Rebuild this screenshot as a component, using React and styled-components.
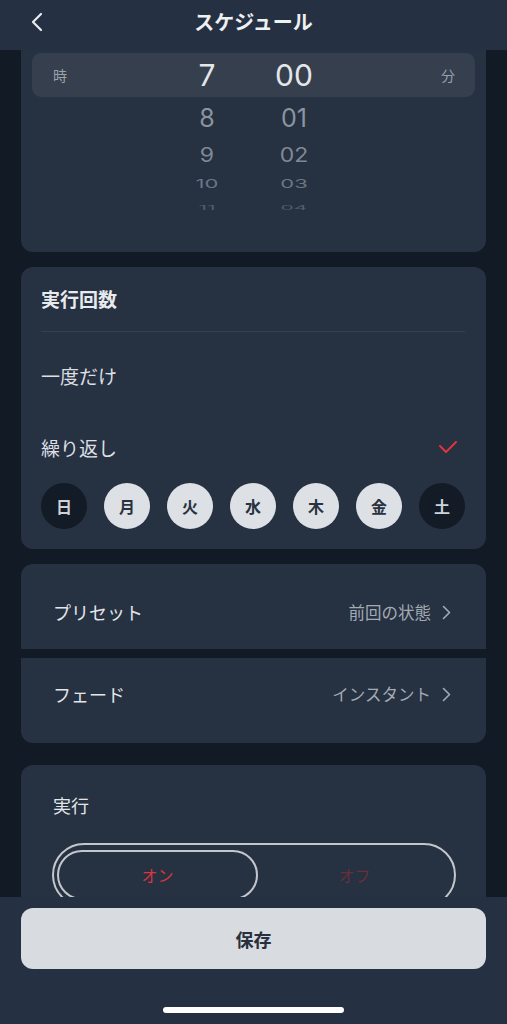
import React, { useState } from "react";
import styled, { createGlobalStyle } from "styled-components";

const GlobalStyle = createGlobalStyle`
  * { box-sizing: border-box; }
  body {
    margin: 0;
    background: #121a26;
    font-family: "Noto Sans CJK JP", "Noto Sans", sans-serif;
  }
`;

const wheelRows = [
  { hour: "7", minute: "00", h: 44, size: 30, color: "#e4e6e9", sy: 1, selected: true },
  { hour: "8", minute: "01", h: 42, size: 25, color: "#8b94a0", sy: 1 },
  { hour: "9", minute: "02", h: 32, size: 23, color: "#7f8996", sy: 0.85 },
  { hour: "10", minute: "03", h: 26, size: 22, color: "#6c7683", sy: 0.55 },
  { hour: "11", minute: "04", h: 12, size: 21, color: "#525c69", sy: 0.28 },
];

const days = [
  { label: "日", on: false },
  { label: "月", on: true },
  { label: "火", on: true },
  { label: "水", on: true },
  { label: "木", on: true },
  { label: "金", on: true },
  { label: "土", on: false },
];

function Chevron() {
  return (
    <svg width="9" height="15" viewBox="0 0 9 15">
      <polyline points="1.5,1.5 7.5,7.5 1.5,13.5" fill="none" stroke="#a3aab3" strokeWidth="1.6" strokeLinecap="round" strokeLinejoin="round" />
    </svg>
  );
}

function Check() {
  return (
    <svg width="20" height="14" viewBox="0 0 20 14">
      <polyline points="2,6 8,12 18,2" fill="none" stroke="#e0343b" strokeWidth="2" strokeLinecap="round" strokeLinejoin="round" />
    </svg>
  );
}

function App() {
  const [mode, setMode] = useState("repeat");
  const [on, setOn] = useState(true);

  return (
    <Screen>
      <GlobalStyle />
      <Header>
        <BackButton>
          <svg width="12" height="20" viewBox="0 0 12 20">
            <polyline points="10,2 2,10 10,18" fill="none" stroke="#e9ebee" strokeWidth="2.2" strokeLinecap="round" strokeLinejoin="round" />
          </svg>
        </BackButton>
        <Title>スケジュール</Title>
        <span />
      </Header>

      <Content>
        <PickerCard>
          {wheelRows.map((row) => (
            <WheelRow key={row.hour} $h={row.h} $selected={row.selected}>
              <UnitLabel>{row.selected ? "時" : ""}</UnitLabel>
              <Digit $size={row.size} $color={row.color} $sy={row.sy}>{row.hour}</Digit>
              <Digit $size={row.size} $color={row.color} $sy={row.sy}>{row.minute}</Digit>
              <UnitLabel $right>{row.selected ? "分" : ""}</UnitLabel>
            </WheelRow>
          ))}
        </PickerCard>

        <Card $pad="20px 21px 20px 20px">
          <SectionTitle>実行回数</SectionTitle>
          <Divider />
          <OptionRow $first onClick={() => setMode("once")}>
            <span>一度だけ</span>
            {mode === "once" && <Check />}
          </OptionRow>
          <OptionRow onClick={() => setMode("repeat")}>
            <span>繰り返し</span>
            {mode === "repeat" && <Check />}
          </OptionRow>
          <DayRow>
            {days.map((d) => (
              <DayCircle key={d.label} $on={d.on}>{d.label}</DayCircle>
            ))}
          </DayRow>
        </Card>

        <Group>
          <LinkRow $top>
            <RowLabel>プリセット</RowLabel>
            <RowValue>前回の状態<Chevron /></RowValue>
          </LinkRow>
          <LinkRow>
            <RowLabel>フェード</RowLabel>
            <RowValue>インスタント<Chevron /></RowValue>
          </LinkRow>
        </Group>

        <Card $pad="28px 30px 30px 31px">
          <RowLabel $small>実行</RowLabel>
          <Segment>
            <SegmentItem $active={on} onClick={() => setOn(true)}>オン</SegmentItem>
            <SegmentItem $active={!on} onClick={() => setOn(false)}>オフ</SegmentItem>
          </Segment>
        </Card>
      </Content>

      <Footer>
        <SaveButton>保存</SaveButton>
        <HomeIndicator />
      </Footer>
    </Screen>
  );
}

export default App;

const Screen = styled.div`
  height: 100vh;
  display: flex;
  flex-direction: column;
  background: #121a26;
  overflow: hidden;
`;

const Header = styled.header`
  flex-shrink: 0;
  height: 50px;
  display: grid;
  grid-template-columns: 70px 1fr 70px;
  align-items: center;
  background: #253042;
`;

const BackButton = styled.button`
  border: none;
  background: none;
  padding: 0 0 7px 31px;
  display: flex;
  align-items: center;
  cursor: pointer;
`;

const Title = styled.h1`
  margin: 0 0 8px;
  text-align: center;
  font-size: 20px;
  font-weight: 700;
  color: #eef0f2;
`;

const Content = styled.main`
  flex: 1;
  min-height: 0;
  overflow: hidden;
  padding: 0 21px;
  display: flex;
  flex-direction: column;
  gap: 15px;
`;

const Card = styled.section`
  flex-shrink: 0;
  background: #263142;
  border-radius: 12px;
  padding: ${(p) => p.$pad || "20px"};
`;

const PickerCard = styled(Card)`
  border-radius: 0 0 12px 12px;
  padding: 3px 11px 43px;
`;

const WheelRow = styled.div`
  height: ${(p) => p.$h}px;
  display: grid;
  grid-template-columns: 97px 60px 60px 1fr;
  column-gap: 27px;
  align-items: center;
  padding: 0 20px 0 21px;
  border-radius: 9px;
  background: ${(p) => (p.$selected ? "#353f4e" : "transparent")};
`;

const UnitLabel = styled.span`
  font-size: 14px;
  color: #9aa2ac;
  text-align: ${(p) => (p.$right ? "right" : "left")};
`;

const Digit = styled.span`
  font-family: Inter, "Liberation Sans", sans-serif;
  font-size: ${(p) => p.$size}px;
  line-height: 1;
  color: ${(p) => p.$color};
  text-align: center;
  transform: scaleY(${(p) => p.$sy});
`;

const SectionTitle = styled.h2`
  margin: 0;
  font-size: 19px;
  line-height: 24px;
  font-weight: 700;
  color: #e8eaed;
`;

const Divider = styled.hr`
  margin: 20px 0 0;
  border: none;
  height: 1px;
  background: #354050;
`;

const OptionRow = styled.div`
  height: 72px;
  margin-top: ${(p) => (p.$first ? "7px" : "0")};
  display: flex;
  align-items: center;
  justify-content: space-between;
  padding-right: 7px;
  font-size: 19px;
  color: #dcdfe3;
  cursor: pointer;
`;

const DayRow = styled.div`
  display: flex;
  justify-content: space-between;
`;

const DayCircle = styled.span`
  width: 46px;
  height: 46px;
  border-radius: 50%;
  display: flex;
  align-items: center;
  justify-content: center;
  font-size: 16px;
  font-weight: 600;
  background: ${(p) => (p.$on ? "#dde0e4" : "#131b27")};
  color: ${(p) => (p.$on ? "#2a3240" : "#cfd3d8")};
`;

const Group = styled.div`
  flex-shrink: 0;
  display: flex;
  flex-direction: column;
  gap: 9px;
  margin-bottom: 7px;
`;

const LinkRow = styled.div`
  height: 85px;
  display: flex;
  align-items: ${(p) => (p.$top ? "flex-end" : "flex-start")};
  justify-content: space-between;
  padding: ${(p) => (p.$top ? "0 35px 25px 32px" : "24px 35px 0 32px")};
  background: #263142;
  border-radius: ${(p) => (p.$top ? "12px 12px 0 0" : "0 0 12px 12px")};
`;

const RowLabel = styled.span`
  display: block;
  font-size: 18px;
  line-height: 24px;
  color: #e3e6e9;
  padding-left: ${(p) => (p.$small ? "1px" : "0")};
`;

const RowValue = styled.span`
  display: flex;
  align-items: center;
  gap: 11px;
  font-size: 16.5px;
  line-height: 24px;
  color: #a3aab3;
`;

const Segment = styled.div`
  margin-top: 26px;
  height: 64px;
  border: 2px solid #c3c7cc;
  border-radius: 32px;
  padding: 5px 3px;
  display: grid;
  grid-template-columns: 201px 1fr;
`;

const SegmentItem = styled.button`
  border: 2px solid ${(p) => (p.$active ? "#c3c7cc" : "transparent")};
  border-radius: 25px;
  background: none;
  font-family: inherit;
  font-size: 16px;
  color: ${(p) => (p.$active ? "#d9363e" : "#6a2e3b")};
  cursor: pointer;
`;

const Footer = styled.footer`
  flex-shrink: 0;
  height: 127px;
  background: #253042;
  padding: 11px 21px 0;
  display: flex;
  flex-direction: column;
`;

const SaveButton = styled.button`
  height: 61px;
  border: none;
  border-radius: 12px;
  background: #d8dbdf;
  font-family: inherit;
  font-size: 18px;
  font-weight: 700;
  color: #283040;
  cursor: pointer;
`;

const HomeIndicator = styled.span`
  margin: 38px auto 0;
  width: 181px;
  height: 6px;
  border-radius: 3px;
  background: #ffffff;
`;
